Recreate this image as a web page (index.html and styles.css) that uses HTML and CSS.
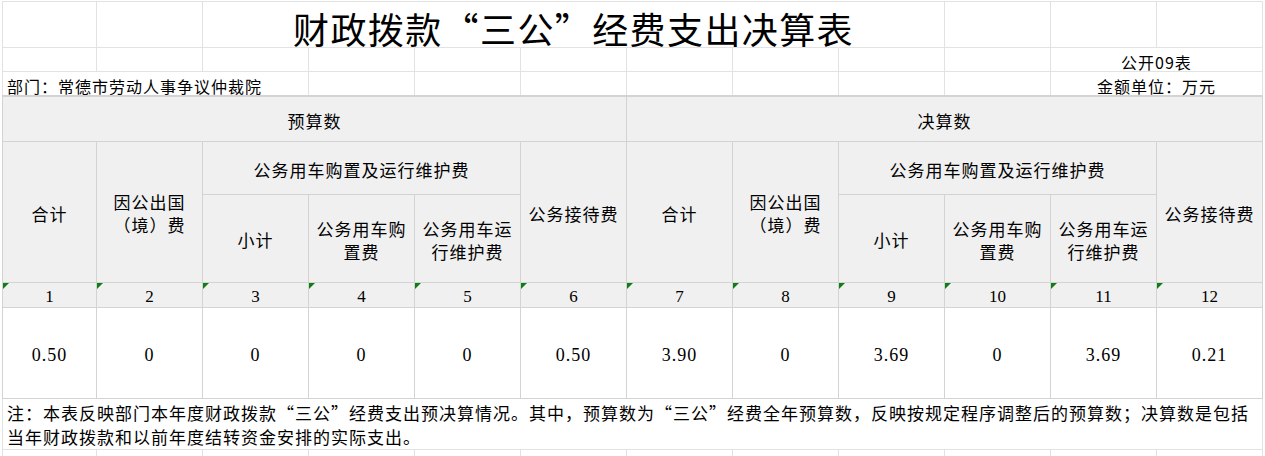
FILE: index.html
```html
<!DOCTYPE html>
<html lang="zh-CN">
<head>
<meta charset="utf-8">
<title>财政拨款“三公”经费支出决算表</title>
<link rel="stylesheet" href="styles.css">
</head>
<body>
<div class="sheet">
  <div class="top">
    <div></div><div></div>
    <div class="title">财政拨款“三公”经费支出决算表</div>
    <div></div><div></div><div></div>

    <div></div><div></div><div></div><div></div><div></div>
    <div></div><div></div><div></div><div></div><div></div>
    <div class="right-note">公开09表</div>

    <div class="dept">部门：常德市劳动人事争议仲裁院</div>
    <div></div><div></div><div></div><div></div><div></div><div></div><div></div>
    <div class="right-note">金额单位：万元</div>
  </div>

  <div class="tbl">
    <div class="h span6">预算数</div>
    <div class="h span6">决算数</div>

    <div class="h rows2">合计</div>
    <div class="h rows2">因公出国（境）费</div>
    <div class="h span3">公务用车购置及运行维护费</div>
    <div class="h rows2">公务接待费</div>
    <div class="h rows2">合计</div>
    <div class="h rows2">因公出国（境）费</div>
    <div class="h span3">公务用车购置及运行维护费</div>
    <div class="h rows2">公务接待费</div>

    <div class="h">小计</div>
    <div class="h">公务用车购置费</div>
    <div class="h">公务用车运行维护费</div>
    <div class="h">小计</div>
    <div class="h">公务用车购置费</div>
    <div class="h">公务用车运行维护费</div>

    <div class="num">1</div><div class="num">2</div><div class="num">3</div><div class="num">4</div>
    <div class="num">5</div><div class="num">6</div><div class="num">7</div><div class="num">8</div>
    <div class="num">9</div><div class="num">10</div><div class="num">11</div><div class="num">12</div>

    <div class="val">0.50</div><div class="val">0</div><div class="val">0</div><div class="val">0</div>
    <div class="val">0</div><div class="val">0.50</div><div class="val">3.90</div><div class="val">0</div>
    <div class="val">3.69</div><div class="val">0</div><div class="val">3.69</div><div class="val">0.21</div>
  </div>

  <div class="notes">
    <div class="note">注：本表反映部门本年度财政拨款“三公”经费支出预决算情况。其中，预算数为“三公”经费全年预算数，反映按规定程序调整后的预算数；决算数是包括当年财政拨款和以前年度结转资金安排的实际支出。</div>
    <div></div><div></div><div></div><div></div><div></div><div></div>
    <div></div><div></div><div></div><div></div><div></div><div></div>
  </div>
</div>
</body>
</html>
```

FILE: styles.css
```css
html, body {
  margin: 0;
  padding: 0;
  background: #ffffff;
}

body {
  font-family: "Noto Sans CJK SC", sans-serif;
  color: #000000;
  overflow: hidden;
}

.sheet {
  width: 1261px;
  margin: 1px 0 0 2px;
}

.top,
.tbl,
.notes {
  display: grid;
  grid-template-columns: 93px repeat(11, 105px);
  gap: 1px;
}

.top {
  grid-template-rows: 45px 23px 23px;
  padding: 1px 1px 0 1px;
  background: #e2e2e2;
}

.top > div,
.notes > div {
  background: #ffffff;
}

.title {
  grid-column: span 7;
  display: flex;
  align-items: center;
  justify-content: center;
  font-size: 36px;
  letter-spacing: 1.4px;
  line-height: 1;
  padding-top: 6px;
  box-sizing: border-box;
}

.right-note {
  grid-column: span 2;
  display: flex;
  align-items: center;
  justify-content: center;
  font-size: 16px;
  letter-spacing: 1px;
  line-height: 1;
  padding-top: 5px;
  box-sizing: border-box;
}

.dept {
  grid-column: span 3;
  display: flex;
  align-items: center;
  font-size: 16px;
  letter-spacing: 1px;
  line-height: 1;
  padding: 5px 0 0 4px;
  box-sizing: border-box;
}

.tbl {
  grid-template-rows: 44px 52px 87px 24px 90px;
  padding: 2px 1px 1px 1px;
  background: #d3d3d3;
}

.tbl > div {
  display: flex;
  align-items: center;
  justify-content: center;
  text-align: center;
}

.h {
  background: #f0f0f0;
  font-size: 17px;
  letter-spacing: 1px;
  line-height: 23px;
  padding-top: 2px;
  box-sizing: border-box;
}

.span6 {
  grid-column: span 6;
}

.span3 {
  grid-column: span 3;
}

.rows2 {
  grid-row: span 2;
}

.num {
  position: relative;
  background: #f0f0f0;
  font-family: "Liberation Serif", serif;
  font-size: 17px;
  line-height: 1;
  padding-top: 2px;
  box-sizing: border-box;
}

.num::before {
  content: "";
  position: absolute;
  top: 0;
  left: 0;
  border-top: 6px solid #0f7d0f;
  border-right: 6px solid transparent;
}

.val {
  background: #ffffff;
  font-family: "Liberation Serif", serif;
  font-size: 18px;
  letter-spacing: 1px;
  line-height: 1;
  padding-top: 3px;
  box-sizing: border-box;
}

.notes {
  grid-template-rows: 50px 7px;
  padding: 0 1px;
  background: #e2e2e2;
}

.note {
  grid-column: span 12;
  font-size: 17px;
  letter-spacing: 1px;
  line-height: 24px;
  padding: 2px 0 0 4px;
  box-sizing: border-box;
}
```
